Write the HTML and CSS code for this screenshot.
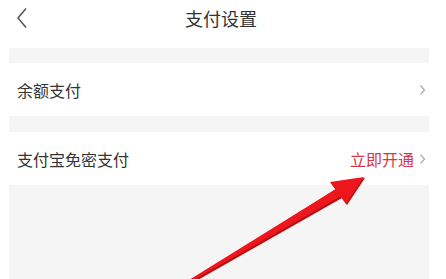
FILE: index.html
```html
<!DOCTYPE html>
<html lang="zh-CN">
<head>
  <meta charset="UTF-8">
  <title>支付设置</title>
  <link rel="stylesheet" href="styles.css">
</head>
<body>

  <div class="screen">
    <div class="header">
      <svg class="back" width="12" height="22" viewBox="0 0 12 22">
        <polyline points="10,1.5 2,11 10,20.5" fill="none" stroke="#555" stroke-width="1.5"/>
      </svg>
      <div class="title">支付设置</div>
    </div>

    <div class="gap"></div>

    <div class="row">
      <div class="label">余额支付</div>
      <div class="right">
        <svg class="arrow-r" width="7" height="12" viewBox="0 0 7 12">
          <polyline points="1.5,1.5 5.5,6 1.5,10.5" fill="none" stroke="#aaa" stroke-width="1.2"/>
        </svg>
      </div>
    </div>

    <div class="gap second"></div>

    <div class="row">
      <div class="label">支付宝免密支付</div>
      <div class="right">
        <span class="action">立即开通</span>
        <svg class="arrow-r" width="7" height="12" viewBox="0 0 7 12">
          <polyline points="1.5,1.5 5.5,6 1.5,10.5" fill="none" stroke="#aaa" stroke-width="1.2"/>
        </svg>
      </div>
    </div>

    <div class="rest"></div>
  </div>

  <!-- red pointer drawn over the screenshot -->
  <svg class="pointer" width="446" height="279" viewBox="0 0 446 279">
    <polygon points="189,280 195,280 341,197 335,188" fill="#b80d12" transform="translate(1,1)"/>
    <polygon points="364,177 330,182 346,204" fill="#b80d12" transform="translate(1,1)"/>
    <polygon points="189,280 194,280 341,196 336,189" fill="#ec161c"/>
    <polygon points="364,177 330,182 346,204" fill="#ec161c"/>
  </svg>

</body>
</html>
```

FILE: styles.css
```css
body {
  margin: 0;
  font-family: "Noto Sans CJK SC", "Noto Sans", sans-serif;
  background: #fff;
  width: 446px;
  height: 279px;
  overflow: hidden;
  position: relative;
}

.screen {
  margin: 0 17px 0 9px;
  height: 279px;
  display: flex;
  flex-direction: column;
}

.header {
  height: 48px;
  flex: none;
  position: relative;
  display: flex;
  align-items: center;
  justify-content: center;
}

.header .back {
  position: absolute;
  left: 7px;
  top: 7px;
}

.title {
  font-size: 18px;
  color: #333;
  margin-top: -13px;
  margin-left: 4px;
}

.gap {
  height: 15px;
  flex: none;
  background: #f5f5f5;
}

.gap.second {
  height: 16px;
}

.row {
  height: 53px;
  flex: none;
  display: flex;
  align-items: center;
  justify-content: space-between;
  padding: 0 3px 0 8px;
}

.label {
  font-size: 16px;
  color: #333;
}

.right {
  display: flex;
  align-items: center;
  gap: 5px;
}

.action {
  font-size: 16px;
  color: #d43848;
}

.arrow-r {
  display: block;
}

.rest {
  flex: 1;
  background: #f5f5f5;
}

.pointer {
  position: absolute;
  left: 0;
  top: 0;
}
```
